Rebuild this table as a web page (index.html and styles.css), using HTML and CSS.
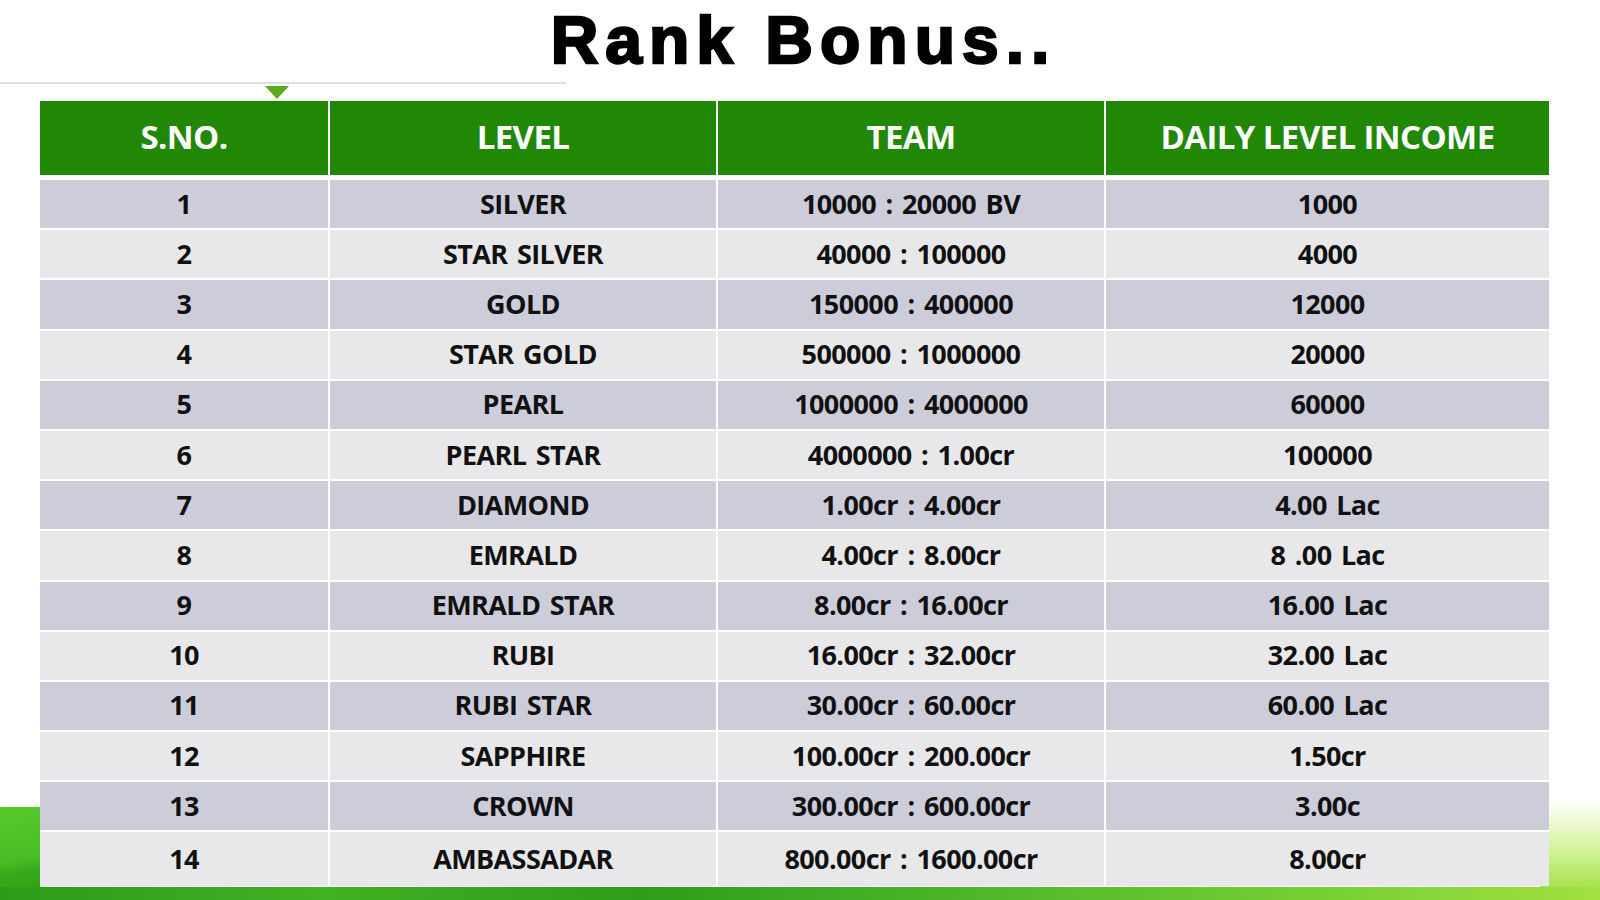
FILE: index.html
```html
<!DOCTYPE html>
<html lang="en">
<head>
<meta charset="utf-8">
<title>Rank Bonus</title>
<link rel="stylesheet" href="styles.css">
</head>
<body>
<div class="slide">
  <h1 class="title">Rank Bonus..</h1>
  <div class="rule"><span class="marker"></span></div>
  <div class="table">
    <div class="row head">
      <div class="cell">S.NO.</div>
      <div class="cell">LEVEL</div>
      <div class="cell">TEAM</div>
      <div class="cell">DAILY LEVEL INCOME</div>
    </div>
    <div class="body">
      <div class="row odd"><div class="cell">1</div><div class="cell">SILVER</div><div class="cell">10000 : 20000 BV</div><div class="cell">1000</div></div>
      <div class="row even"><div class="cell">2</div><div class="cell">STAR SILVER</div><div class="cell">40000 : 100000</div><div class="cell">4000</div></div>
      <div class="row odd"><div class="cell">3</div><div class="cell">GOLD</div><div class="cell">150000 : 400000</div><div class="cell">12000</div></div>
      <div class="row even"><div class="cell">4</div><div class="cell">STAR GOLD</div><div class="cell">500000 : 1000000</div><div class="cell">20000</div></div>
      <div class="row odd"><div class="cell">5</div><div class="cell">PEARL</div><div class="cell">1000000 : 4000000</div><div class="cell">60000</div></div>
      <div class="row even"><div class="cell">6</div><div class="cell">PEARL STAR</div><div class="cell">4000000 : 1.00cr</div><div class="cell">100000</div></div>
      <div class="row odd"><div class="cell">7</div><div class="cell">DIAMOND</div><div class="cell">1.00cr : 4.00cr</div><div class="cell">4.00 Lac</div></div>
      <div class="row even"><div class="cell">8</div><div class="cell">EMRALD</div><div class="cell">4.00cr : 8.00cr</div><div class="cell">8 .00 Lac</div></div>
      <div class="row odd"><div class="cell">9</div><div class="cell">EMRALD STAR</div><div class="cell">8.00cr : 16.00cr</div><div class="cell">16.00 Lac</div></div>
      <div class="row even"><div class="cell">10</div><div class="cell">RUBI</div><div class="cell">16.00cr : 32.00cr</div><div class="cell">32.00 Lac</div></div>
      <div class="row odd"><div class="cell">11</div><div class="cell">RUBI STAR</div><div class="cell">30.00cr : 60.00cr</div><div class="cell">60.00 Lac</div></div>
      <div class="row even"><div class="cell">12</div><div class="cell">SAPPHIRE</div><div class="cell">100.00cr : 200.00cr</div><div class="cell">1.50cr</div></div>
      <div class="row odd"><div class="cell">13</div><div class="cell">CROWN</div><div class="cell">300.00cr : 600.00cr</div><div class="cell">3.00c</div></div>
      <div class="row even"><div class="cell">14</div><div class="cell">AMBASSADAR</div><div class="cell">800.00cr : 1600.00cr</div><div class="cell">8.00cr</div></div>
    </div>
  </div>
  <div class="deco-left"></div>
  <div class="deco-right"></div>
  <div class="deco-bottom"></div>
</div>
</body>
</html>
```

FILE: styles.css
```css
html, body {
  margin: 0;
  padding: 0;
  background: #ffffff;
}

.slide {
  position: relative;
  width: 1600px;
  height: 900px;
  overflow: hidden;
  display: flex;
  flex-direction: column;
}

.title {
  margin: 7px 0 0 0;
  padding-left: 7px;
  height: 66px;
  font-family: "Liberation Sans", Arial, sans-serif;
  font-weight: 700;
  font-size: 66px;
  line-height: 66px;
  letter-spacing: 7px;
  text-align: center;
  color: #000;
  -webkit-text-stroke: 2.4px #000;
}

.rule {
  position: relative;
  margin-top: 9px;
  width: 566px;
  height: 2px;
  background: #d9e0e6;
}

.marker {
  position: absolute;
  left: 265px;
  top: 4px;
  width: 0;
  height: 0;
  border-left: 12.5px solid transparent;
  border-right: 12.5px solid transparent;
  border-top: 13px solid #5cab1c;
}

.table {
  position: relative;
  z-index: 1;
  margin: 17px 0 0 40px;
  width: 1509px;
  display: flex;
  flex-direction: column;
  gap: 5px;
  background: #fff;
  font-family: "Open Sans", "Noto Sans", sans-serif;
  font-weight: 700;
}

.row {
  display: grid;
  grid-template-columns: 288px 386px 386px 443px;
  column-gap: 2px;
}

.cell {
  display: flex;
  align-items: center;
  justify-content: center;
  white-space: nowrap;
}

.head {
  height: 74px;
}

.head .cell {
  background: #218806;
  color: #fff;
  font-size: 33px;
  letter-spacing: -0.6px;
  padding-bottom: 3px;
}

.body {
  height: 706px;
  display: grid;
  grid-template-rows: repeat(13, 48.2px) 1fr;
  row-gap: 2px;
}

.body .cell {
  font-size: 27px;
  letter-spacing: -0.6px;
  word-spacing: 3px;
  color: #111;
  padding-bottom: 2px;
}

.odd .cell {
  background: #cdcdda;
}

.even .cell {
  background: #e8e8ea;
}

.deco-left {
  position: absolute;
  left: 0;
  top: 807px;
  width: 40px;
  height: 93px;
  background: linear-gradient(170deg, #58c82e 0%, #4bbd24 55%, #38a81c 70%, #2f9e18 100%);
}

.deco-right {
  position: absolute;
  right: 0;
  top: 800px;
  width: 60px;
  height: 100px;
  background: linear-gradient(180deg, #ffffff 0%, #f0fbd8 20%, #d2f29a 50%, #b0e65a 80%, #9adc3c 100%);
}

.deco-bottom {
  position: absolute;
  left: 0;
  right: 0;
  bottom: 0;
  height: 13px;
  background: linear-gradient(90deg, #2c9c18 0%, #3fb124 20%, #2e9e18 40%, #4cb52a 60%, #7cd234 85%, #a2e040 100%);
}
```
